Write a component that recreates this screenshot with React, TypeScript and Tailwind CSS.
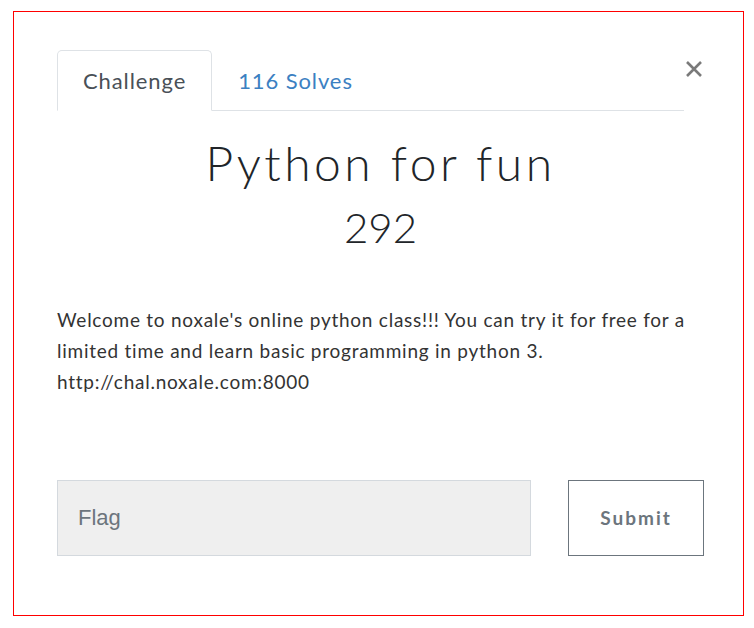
import React, { useState } from "react";

interface ChallengeInfo {
  name: string;
  value: number;
  solves: number;
  description: string;
  link: string;
}

const challenge: ChallengeInfo = {
  name: "Python for fun",
  value: 292,
  solves: 116,
  description:
    "Welcome to noxale's online python class!!! You can try it for free for a limited time and learn basic programming in python 3.",
  link: "http://chal.noxale.com:8000",
};

export default function App() {
  const [tab, setTab] = useState<"challenge" | "solves">("challenge");
  const [flag, setFlag] = useState("");

  return (
    <div className="pt-[11px] pl-[13px] font-['Lato',sans-serif]">
      <div className="w-[731px] h-[605px] border border-[#ff0000] bg-white pl-[43px] pr-[39px] pt-[38px]">
        {/* header: tabs + close */}
        <div className="flex items-start">
          <ul className="flex flex-1 border-b border-[#dee2e6]">
            <li>
              <button
                onClick={() => setTab("challenge")}
                className={
                  tab === "challenge"
                    ? "-mb-px block h-[61px] px-[25px] text-[22px] tracking-[0.9px] text-[#495057] bg-white border border-[#dee2e6] border-b-white rounded-t-[5px]"
                    : "-mb-px block h-[61px] px-[25px] text-[22px] tracking-[0.9px] text-[#3b80c2] border border-transparent"
                }
              >
                Challenge
              </button>
            </li>
            <li>
              <button
                onClick={() => setTab("solves")}
                className={
                  tab === "solves"
                    ? "-mb-px block h-[61px] px-[25px] text-[22px] tracking-[0.9px] text-[#495057] bg-white border border-[#dee2e6] border-b-white rounded-t-[5px]"
                    : "-mb-px block h-[61px] px-[25px] text-[22px] tracking-[0.9px] text-[#3b80c2] border border-transparent"
                }
              >
                {challenge.solves} Solves
              </button>
            </li>
          </ul>
          <button className="w-[20px] mt-[9px] h-[20px] flex items-center justify-center text-[#7a7a7a]">
            <svg width="18" height="18" viewBox="0 0 18 18">
              <path d="M2 2 L16 16 M16 2 L2 16" stroke="currentColor" strokeWidth="2.6" />
            </svg>
          </button>
        </div>

        {/* title */}
        <div className="text-center text-[#212529] mt-[22px]">
          <h2 className="text-[48px] font-light leading-[60px] tracking-[3.5px]">
            {challenge.name}
          </h2>
          <h3 className="text-[42px] font-light leading-[54px] mt-[7px]">{challenge.value}</h3>
        </div>

        {/* description */}
        <p className="mt-[50px] text-[19px] leading-[31px] tracking-[0.75px] text-[#333]">
          {challenge.description}
          <br />
          {challenge.link}
        </p>

        {/* submit row */}
        <div className="mt-[83px] flex gap-[37px]">
          <input
            value={flag}
            onChange={(e) => setFlag(e.target.value)}
            placeholder="Flag"
            className="w-[474px] h-[76px] bg-[#efefef] border border-[#d4d9de] px-[20px] text-[22px] font-['Liberation_Sans',sans-serif] text-[#495057] placeholder:text-[#6c757d] outline-none"
          />
          <button className="w-[136px] h-[76px] border border-[#6c757d] bg-white text-[19px] font-bold tracking-[2px] text-[#6c757d]">
            Submit
          </button>
        </div>
      </div>
    </div>
  );
}
